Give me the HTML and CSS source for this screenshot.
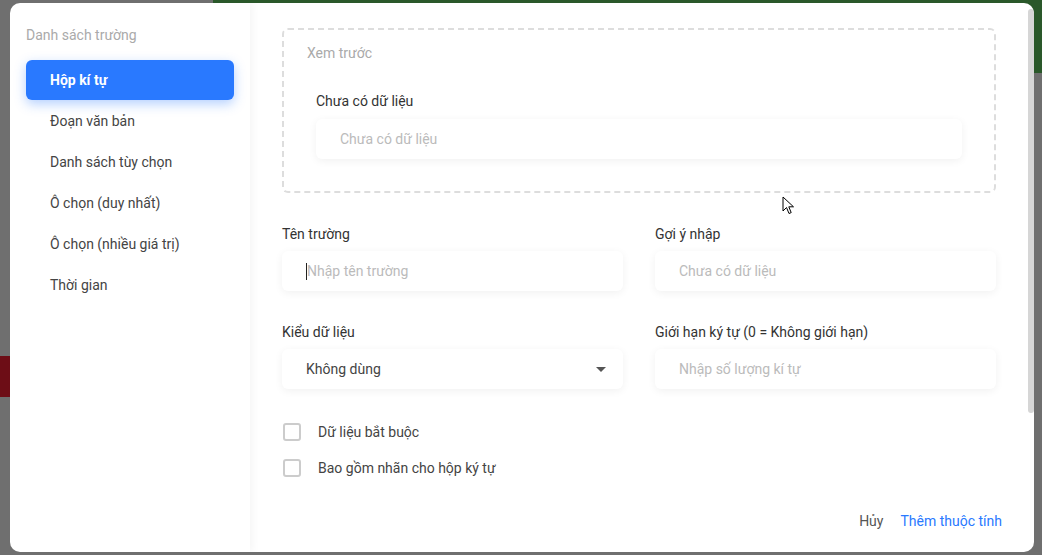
FILE: index.html
```html
<!DOCTYPE html>
<html>
<head>
  <meta charset="utf-8">
  <link rel="stylesheet" href="styles.css">
</head>
<body>
  <div class="backdrop-top"></div>
  <div class="backdrop-red"></div>

  <div class="modal">
    <div class="sidebar">
      <div class="sidebar-title">Danh sách trường</div>
      <div class="field-type active">Hộp kí tự</div>
      <div class="field-type">Đoạn văn bản</div>
      <div class="field-type">Danh sách tùy chọn</div>
      <div class="field-type">Ô chọn (duy nhất)</div>
      <div class="field-type">Ô chọn (nhiều giá trị)</div>
      <div class="field-type">Thời gian</div>
    </div>

    <div class="main">
      <div class="preview">
        <div class="preview-title">Xem trước</div>
        <div class="input-group">
          <label>Chưa có dữ liệu</label>
          <input type="text" class="field-input" placeholder="Chưa có dữ liệu">
        </div>
      </div>

      <div class="form-grid">
        <div class="input-group">
          <label for="nameInput">Tên trường</label>
          <div class="fake-input"><span class="caret"></span><span class="placeholder">Nhập tên trường</span></div>
        </div>
        <div class="input-group">
          <label for="hintInput">Gợi ý nhập</label>
          <input type="text" id="hintInput" class="field-input" placeholder="Chưa có dữ liệu">
        </div>
        <div class="input-group">
          <label>Kiểu dữ liệu</label>
          <div class="select-box">
            <span>Không dùng</span>
            <svg width="10" height="5" viewBox="0 0 10 5"><path d="M0 0 L10 0 L5 5 Z" fill="#555"/></svg>
          </div>
        </div>
        <div class="input-group">
          <label for="limitInput">Giới hạn ký tự (0 = Không giới hạn)</label>
          <input type="text" id="limitInput" class="field-input" placeholder="Nhập số lượng kí tự">
        </div>
      </div>

      <div class="checks">
        <label class="check"><span class="box"></span>Dữ liệu bắt buộc</label>
        <label class="check"><span class="box"></span>Bao gồm nhãn cho hộp ký tự</label>
      </div>

      <div class="footer">
        <button class="btn-cancel">Hủy</button>
        <button class="btn-add">Thêm thuộc tính</button>
      </div>
    </div>

    <div class="scroll-thumb"></div>
  </div>

  <svg class="cursor" width="14" height="20" viewBox="0 0 14 20">
    <path d="M1 1 L1 15 L4.5 11.5 L7 17.5 L9.2 16.6 L6.8 10.8 L11.5 10.8 Z" fill="#fff" stroke="#000" stroke-width="1"/>
  </svg>
</body>
</html>
```

FILE: styles.css
```css
html, body {
  margin: 0;
  height: 100%;
}

body {
  width: 1042px;
  height: 555px;
  overflow: hidden;
  background-color: #6f6f6f;
  font-family: Roboto, "Noto Sans", Arial, sans-serif;
  font-size: 14px;
  color: #444;
  position: relative;
}

.backdrop-top {
  position: absolute;
  left: 213px;
  top: 0;
  right: 0;
  height: 73px;
  background-color: #2a582a;
}

.backdrop-red {
  position: absolute;
  left: 0;
  top: 356px;
  width: 12px;
  height: 41px;
  background-color: #6d0d16;
}

.modal {
  position: absolute;
  left: 10px;
  top: 3px;
  width: 1024px;
  height: 549px;
  background-color: #fff;
  border-radius: 10px;
  display: flex;
  overflow: hidden;
}

.sidebar {
  width: 240px;
  flex-shrink: 0;
  box-sizing: border-box;
  padding: 22px 16px 0 16px;
  box-shadow: 3px 0 8px rgba(0, 0, 0, 0.04);
  position: relative;
  z-index: 1;
}

.sidebar-title {
  color: #aaa;
  line-height: 20px;
  margin-bottom: 15px;
}

.field-type {
  height: 40px;
  line-height: 40px;
  padding-left: 24px;
  margin-bottom: 1px;
  border-radius: 6px;
  color: #444;
}

.field-type.active {
  background-color: #2979ff;
  color: #fff;
  font-weight: 700;
  box-shadow: 0 4px 12px rgba(41, 121, 255, 0.35);
}

.main {
  flex: 1;
  padding: 25px 38px 0 32px;
  box-sizing: border-box;
}

.preview {
  border: 2px dashed #ddd;
  border-radius: 6px;
  padding: 13px 32px 32px 32px;
}

.preview-title {
  color: #aaa;
  line-height: 20px;
  margin-left: -9px;
  margin-bottom: 28px;
}

.input-group {
  display: flex;
  flex-direction: column;
  gap: 7px;
}

.input-group label {
  line-height: 20px;
  color: #333;
}

.preview .input-group {
  gap: 8px;
}

.field-input, .fake-input, .select-box {
  height: 40px;
  box-sizing: border-box;
  width: 100%;
  padding: 0 24px;
  border: none;
  border-radius: 6px;
  background-color: #fff;
  box-shadow: 0 2px 8px rgba(0, 0, 0, 0.06);
  font-family: inherit;
  font-size: 14px;
  color: #444;
  outline: none;
}

.field-input::placeholder {
  color: #bbb;
}

.fake-input {
  display: flex;
  align-items: center;
}

.fake-input .placeholder {
  color: #bbb;
}

.caret {
  width: 1px;
  height: 17px;
  background-color: #222;
}

.select-box {
  display: flex;
  align-items: center;
  justify-content: space-between;
  padding-right: 17px;
}

.form-grid {
  display: grid;
  grid-template-columns: 1fr 1fr;
  column-gap: 32px;
  row-gap: 31px;
  margin-top: 31px;
}

.checks {
  display: flex;
  flex-direction: column;
  gap: 16px;
  margin-top: 33px;
  padding-left: 1px;
}

.check {
  display: flex;
  align-items: center;
  gap: 17px;
  height: 20px;
  line-height: 20px;
  color: #444;
}

.box {
  width: 18px;
  height: 18px;
  box-sizing: border-box;
  border: 2px solid #ccc;
  border-radius: 3px;
}

.footer {
  display: flex;
  justify-content: flex-end;
  gap: 17px;
  margin-top: 33px;
  margin-right: -6px;
}

.footer button {
  border: none;
  background: none;
  padding: 0;
  font-family: inherit;
  font-size: 14px;
  line-height: 20px;
  cursor: pointer;
}

.btn-cancel {
  color: #555;
}

.btn-add {
  color: #2979ff;
}

.scroll-thumb {
  position: absolute;
  right: 0;
  top: 6px;
  width: 6px;
  height: 404px;
  background-color: #d6d6d6;
  border-radius: 3px;
}

.cursor {
  position: absolute;
  left: 782px;
  top: 196px;
}
```
